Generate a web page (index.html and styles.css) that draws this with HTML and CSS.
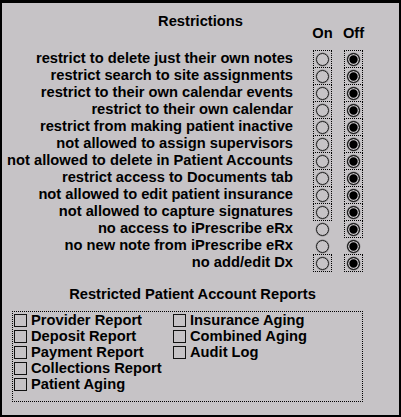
FILE: index.html
```html
<!DOCTYPE html>
<html>
<head>
<meta charset="utf-8">
<link rel="stylesheet" href="styles.css">
</head>
<body>
<div class="panel">
  <div class="title">Restrictions</div>
  <div class="head">
    <span class="head-spacer"></span>
    <span class="head-cell on-col">On</span>
    <span class="head-cell off-col">Off</span>
  </div>
  <div class="rows">
    <div class="row"><span class="label">restrict to delete just their own notes</span><span class="cell boxed on-col"><i class="radio"></i></span><span class="cell boxed off-col"><i class="radio sel"></i></span></div>
    <div class="row"><span class="label">restrict search to site assignments</span><span class="cell boxed on-col"><i class="radio"></i></span><span class="cell boxed off-col"><i class="radio sel"></i></span></div>
    <div class="row"><span class="label">restrict to their own calendar events</span><span class="cell boxed on-col"><i class="radio"></i></span><span class="cell boxed off-col"><i class="radio sel"></i></span></div>
    <div class="row"><span class="label">restrict to their own calendar</span><span class="cell boxed on-col"><i class="radio"></i></span><span class="cell boxed off-col"><i class="radio sel"></i></span></div>
    <div class="row"><span class="label">restrict from making patient inactive</span><span class="cell boxed on-col"><i class="radio"></i></span><span class="cell boxed off-col"><i class="radio sel"></i></span></div>
    <div class="row"><span class="label">not allowed to assign supervisors</span><span class="cell boxed on-col"><i class="radio"></i></span><span class="cell boxed off-col"><i class="radio sel"></i></span></div>
    <div class="row"><span class="label">not allowed to delete in Patient Accounts</span><span class="cell boxed on-col"><i class="radio"></i></span><span class="cell boxed off-col"><i class="radio sel"></i></span></div>
    <div class="row"><span class="label">restrict access to Documents tab</span><span class="cell boxed on-col"><i class="radio"></i></span><span class="cell boxed off-col"><i class="radio sel"></i></span></div>
    <div class="row"><span class="label">not allowed to edit patient insurance</span><span class="cell boxed on-col"><i class="radio"></i></span><span class="cell boxed off-col"><i class="radio sel"></i></span></div>
    <div class="row"><span class="label">not allowed to capture signatures</span><span class="cell boxed on-col"><i class="radio"></i></span><span class="cell boxed off-col"><i class="radio sel"></i></span></div>
    <div class="row"><span class="label">no access to iPrescribe eRx</span><span class="cell on-col"><i class="radio"></i></span><span class="cell boxed off-col"><i class="radio sel"></i></span></div>
    <div class="row"><span class="label">no new note from iPrescribe eRx</span><span class="cell on-col"><i class="radio"></i></span><span class="cell off-col"><i class="radio sel"></i></span></div>
    <div class="row"><span class="label">no add/edit Dx</span><span class="cell boxed on-col"><i class="radio"></i></span><span class="cell boxed off-col"><i class="radio sel"></i></span></div>
  </div>

  <div class="reports">
    <div class="reports-title">Restricted Patient Account Reports</div>
    <div class="reports-box">
      <label class="check"><i class="box"></i>Provider Report</label>
      <label class="check"><i class="box"></i>Deposit Report</label>
      <label class="check"><i class="box"></i>Payment Report</label>
      <label class="check"><i class="box"></i>Collections Report</label>
      <label class="check"><i class="box"></i>Patient Aging</label>
      <label class="check"><i class="box"></i>Insurance Aging</label>
      <label class="check"><i class="box"></i>Combined Aging</label>
      <label class="check"><i class="box"></i>Audit Log</label>
    </div>
  </div>
</div>
</body>
</html>
```

FILE: styles.css
```css
html, body {
  margin: 0;
  padding: 0;
  background: #c6c3c6;
}

.panel {
  width: 401px;
  height: 417px;
  box-sizing: border-box;
  border: 2px solid #000;
  border-top-width: 3px;
  background: #c6c3c6;
  color: #000;
  font-family: "Liberation Sans", Arial, sans-serif;
  font-weight: bold;
  font-size: 14.7px;
  overflow: hidden;
}

.title {
  padding-top: 11px;
  line-height: 15px;
  text-align: center;
}

.head {
  display: flex;
  margin-top: -3px;
  height: 15px;
  line-height: 15px;
}

.head-spacer {
  width: 291px;
}

.head-cell {
  width: 19px;
  display: flex;
  justify-content: center;
}

.head .on-col { margin-left: 20px; }
.head .off-col { margin-left: 12px; }

.rows {
  margin-top: 9px;
}

.row {
  display: flex;
  align-items: flex-start;
  height: 17px;
}

.label {
  width: 291px;
  text-align: right;
  line-height: 17px;
  white-space: nowrap;
}

.cell {
  width: 19px;
  height: 18px;
  box-sizing: border-box;
  border: 1px dotted transparent;
  display: flex;
  align-items: center;
  justify-content: center;
}

.cell.boxed {
  border-color: #000;
}

.row .on-col { margin-left: 20px; }
.row .off-col { margin-left: 12px; }

.radio {
  display: block;
  width: 13px;
  height: 13px;
  box-sizing: border-box;
  border-radius: 50%;
  border: 1px solid #1a1a1a;
  box-shadow: 0 0 0 0.4px rgba(0, 0, 0, 0.35);
}

.radio.sel {
  background: #000;
  box-shadow: inset 0 0 0 1.3px #c6c3c6, 0 0 0 0.4px rgba(0, 0, 0, 0.35);
}

.reports {
  margin-top: 16px;
}

.reports-title {
  line-height: 15px;
  margin-left: 10px;
  width: 351px;
  padding-left: 10px;
  box-sizing: border-box;
  text-align: center;
  white-space: nowrap;
}

.reports-box {
  margin-top: 9px;
  margin-left: 10px;
  width: 351px;
  height: 91px;
  box-sizing: border-box;
  border: 1px dotted #000;
  padding-left: 1px;
  display: grid;
  grid-template-rows: repeat(5, 16px);
  grid-template-columns: 159px auto;
  grid-auto-flow: column;
}

.check {
  display: flex;
  align-items: center;
  line-height: 16px;
  white-space: nowrap;
}

.box {
  display: block;
  width: 13px;
  height: 13px;
  box-sizing: border-box;
  border: 1px solid #111;
  margin-right: 4px;
  flex: none;
}
```
